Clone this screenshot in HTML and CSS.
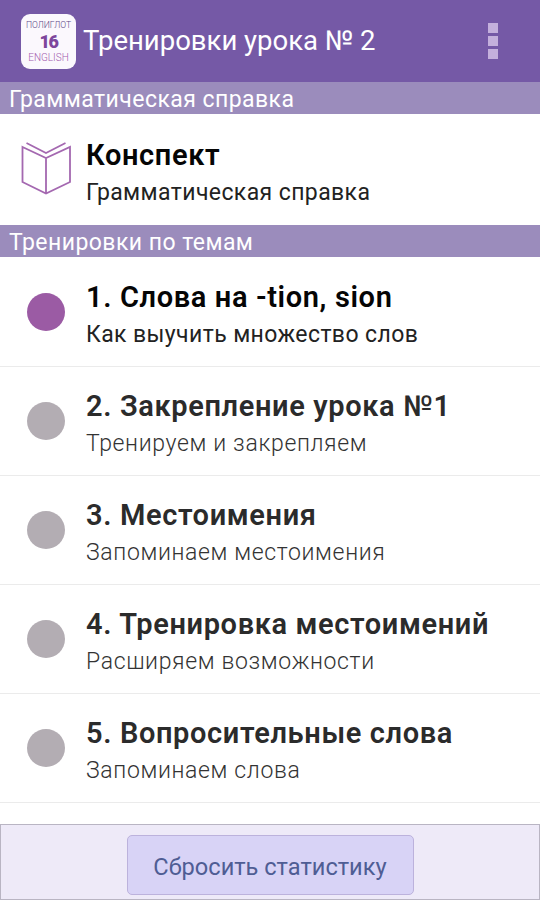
FILE: index.html
```html
<!DOCTYPE html>
<html lang="ru">
<head>
    <meta charset="UTF-8">
    <meta name="viewport" content="width=device-width, initial-scale=1.0">
    <title>Тренировки урока № 2</title>
    <link rel="stylesheet" href="styles.css">
</head>
<body>
    <header class="topbar">
        <div class="logo">
            <span class="logo-top">ПОЛИГЛОТ</span>
            <span class="logo-num">16</span>
            <span class="logo-bottom">ENGLISH</span>
        </div>
        <h1>Тренировки урока № 2</h1>
        <div class="menu">
            <span></span>
            <span></span>
            <span></span>
        </div>
    </header>

    <h2 class="section">Грамматическая справка</h2>
    <div class="item summary">
        <svg class="book" width="50" height="54" viewBox="0 0 50 54">
            <path d="M1.5 6 L25 17 L49 6 V41 L25 52.5 L1.5 41 Z M25 17 V52.5"/>
            <path d="M5.5 2 L25 12 L44.5 2"/>
        </svg>
        <div class="label">
            <div class="title">Конспект</div>
            <div class="sub">Грамматическая справка</div>
        </div>
    </div>

    <h2 class="section">Тренировки по темам</h2>
    <div class="item active">
        <span class="dot"></span>
        <div class="label">
            <div class="title">1. Слова на -tion, sion</div>
            <div class="sub">Как выучить множество слов</div>
        </div>
    </div>
    <div class="item">
        <span class="dot"></span>
        <div class="label">
            <div class="title">2. Закрепление урока <span class="number">№</span>1</div>
            <div class="sub">Тренируем и закрепляем</div>
        </div>
    </div>
    <div class="item">
        <span class="dot"></span>
        <div class="label">
            <div class="title">3. Местоимения</div>
            <div class="sub">Запоминаем местоимения</div>
        </div>
    </div>
    <div class="item">
        <span class="dot"></span>
        <div class="label">
            <div class="title">4. Тренировка местоимений</div>
            <div class="sub">Расширяем возможности</div>
        </div>
    </div>
    <div class="item">
        <span class="dot"></span>
        <div class="label">
            <div class="title">5. Вопросительные слова</div>
            <div class="sub">Запоминаем слова</div>
        </div>
    </div>

    <footer class="footer">
        <button>Сбросить статистику</button>
    </footer>
</body>
</html>
```

FILE: styles.css
```css
* {
    box-sizing: border-box;
}
body {
    margin: 0;
    height: 900px;
    overflow: hidden;
    display: flex;
    flex-direction: column;
    font-family: Roboto, sans-serif;
    background-color: #fff;
    white-space: nowrap;
}
.topbar {
    height: 82px;
    flex-shrink: 0;
    display: flex;
    align-items: center;
    padding: 0 42px 0 21px;
    background-color: #7559a6;
}
.logo {
    width: 55px;
    height: 55px;
    display: flex;
    flex-direction: column;
    align-items: center;
    justify-content: center;
    border-radius: 9px;
    background-color: #fbf8fd;
    font-weight: 300;
    line-height: 16px;
}
.logo-top {
    font-size: 8.6px;
    color: #5a4585;
}
.logo-num {
    font-size: 18px;
    font-weight: 900;
    line-height: 17px;
    letter-spacing: -1.5px;
    color: #7d469c;
}
.logo-bottom {
    font-size: 10px;
    color: #a35cae;
}
h1 {
    margin: 0 0 0 7px;
    padding-bottom: 1px;
    font-size: 27.5px;
    font-weight: 400;
    color: #fff;
}
.menu {
    margin-left: auto;
    display: flex;
    flex-direction: column;
    gap: 3px;
}
.menu span {
    width: 10px;
    height: 10px;
    background-color: #c4b0dc;
}
.section {
    height: 32px;
    flex-shrink: 0;
    margin: 0;
    padding-left: 9px;
    background-color: #9b8cbc;
    color: #fff;
    font-size: 23px;
    font-weight: 400;
    line-height: 35px;
    letter-spacing: 0.45px;
}
.item {
    height: 109px;
    flex-shrink: 0;
    display: flex;
    align-items: center;
    padding-left: 27px;
    border-bottom: 1px solid #ebebeb;
}
.summary {
    height: 111px;
    padding-left: 21px;
    border-bottom: none;
}
.active {
    height: 110px;
}
.book {
    margin-bottom: 4px;
    fill: none;
    stroke: #a468b0;
    stroke-width: 1.8;
}
.dot {
    width: 38px;
    height: 38px;
    border-radius: 50%;
    background-color: #b3adb3;
}
.active .dot {
    background-color: #9b5ba4;
}
.label {
    margin-left: 21px;
    padding-top: 9px;
}
.summary .label {
    margin-left: 15px;
}
.title {
    font-size: 29px;
    font-weight: 600;
    line-height: 37px;
    letter-spacing: 0.63px;
    color: #2b2b2b;
}
.number {
    font-weight: 500;
}
.sub {
    font-size: 23px;
    font-weight: 300;
    line-height: 38px;
    letter-spacing: 0.65px;
    color: #333;
}
.summary .title, .active .title {
    color: #050505;
}
.summary .sub, .active .sub {
    font-weight: 400;
    letter-spacing: 0.4px;
    color: #222;
}
.footer {
    height: 76px;
    margin-top: auto;
    display: flex;
    justify-content: center;
    align-items: center;
    padding-top: 6px;
    background-color: #eeeaf8;
    border: 1px solid #b9b5c3;
}
button {
    width: 287px;
    height: 60px;
    padding: 4px 0 0;
    background-color: #d8d3f6;
    border: 1px solid #bcb2dc;
    border-radius: 5px;
    color: #4f5d94;
    font: 23.6px Roboto, sans-serif;
}
```
